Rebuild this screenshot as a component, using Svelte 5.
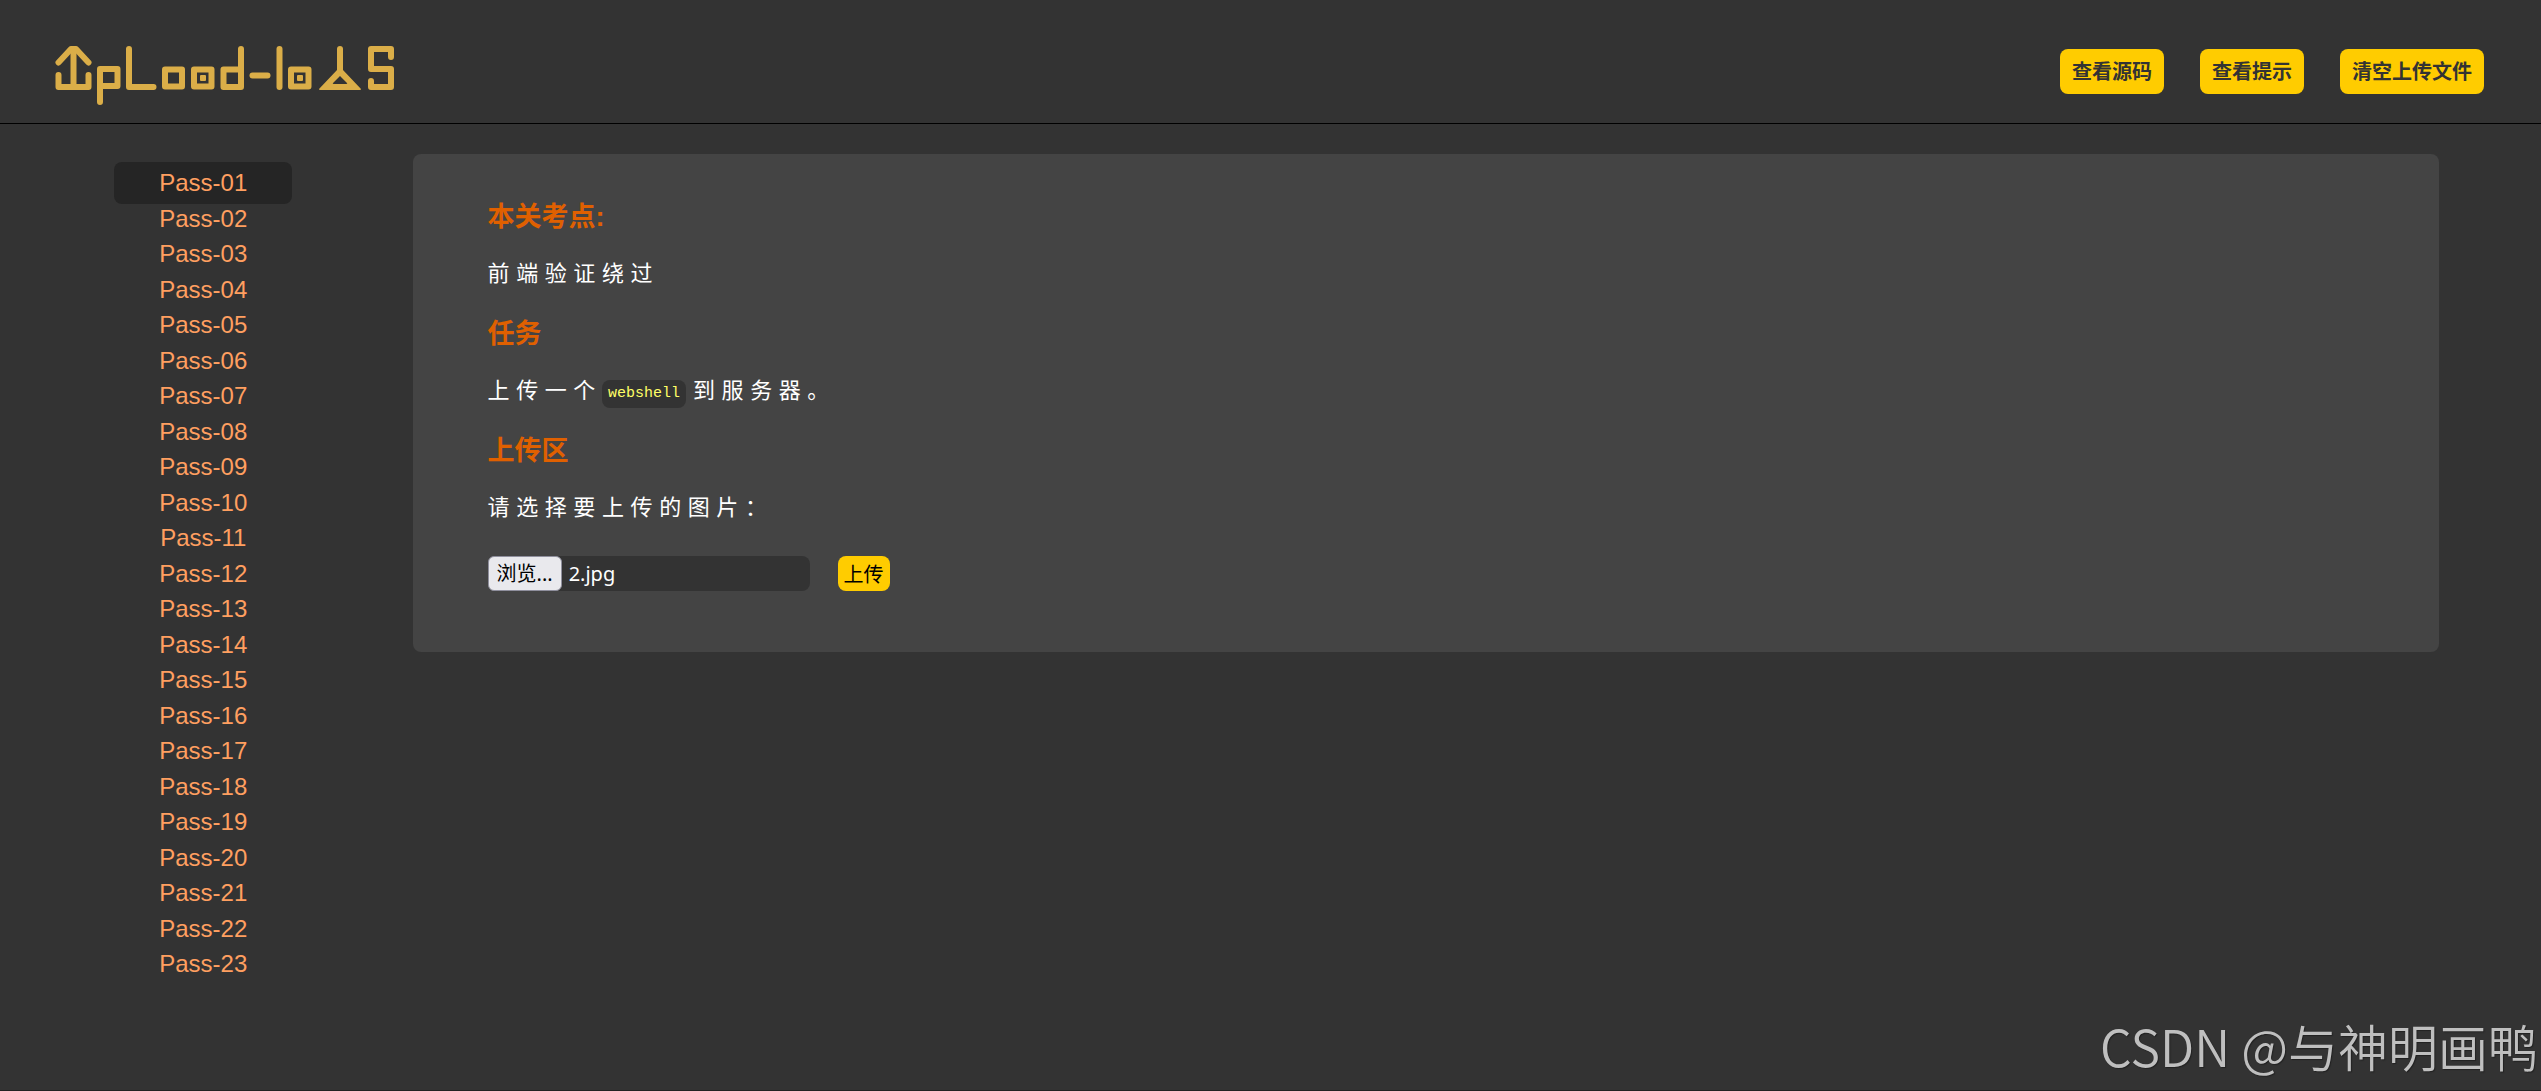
<script>
  const passes = Array.from({ length: 23 }, (_, i) => `Pass-${String(i + 1).padStart(2, '0')}`);
  const actions = ['查看源码', '查看提示', '清空上传文件'];
  let current = $state('Pass-01');
  let fileName = $state('2.jpg');

  function pick(event) {
    fileName = event.currentTarget.files[0]?.name ?? '';
  }
</script>

<div class="page">
  <header>
    <a class="logo" href="#home" aria-label="Upload-labs">
      <svg viewBox="0 0 340 62" width="340" height="62" fill="none" stroke="#dbae48" stroke-width="6" stroke-linejoin="round" stroke-linecap="round">
        <path d="M3.5 17.5 16 4h5L33.500 17.500" />
        <path d="M18.500 5V42M3.500 30V42H33.500V30" />
        <path d="M45 57V24H62.500V41H46" />
        <path d="M74 4V42H98.500" />
        <path d="M110 24.500h17v17h-17z" />
        <path d="M139 24.500h17.500v17h-17.500z" />
        <path d="M186 4V42H168.500V24.500H186" />
        <path d="M197.500 30.500H212.500" />
        <path d="M224.500 4V42" />
        <path d="M236 24.500h17.500v17h-17.500z" />
        <path d="M285 4V26" />
        <path d="M336 12V4H316V24H336V42H316V36" />
        <g fill="#dbae48" stroke="none">
          <rect x="145" y="30" width="6" height="6" rx="1" />
          <rect x="242" y="30" width="6" height="6" rx="1" />
          <path fill-rule="evenodd" d="M282 25h6l18 19q0 1-1 1H265q-1 0-1-1zM285 31l-7 7q-1 1 1 1h12q2 0 1-1z" />
        </g>
      </svg>
    </a>
    <nav class="actions">
      {#each actions as action}
        <button type="button">{action}</button>
      {/each}
    </nav>
  </header>

  <div class="body">
    <nav class="menu" aria-label="Pass">
      <ul>
        {#each passes as pass}
          <li>
            <a href="#{pass}" class:active={pass === current} onclick={() => (current = pass)}>{pass}</a>
          </li>
        {/each}
      </ul>
    </nav>

    <main>
      <h3>本关考点:</h3>
      <p>前端验证绕过</p>
      <h3>任务</h3>
      <p>上传一个<code>webshell</code>到服务器。</p>
      <h3>上传区</h3>
      <p>请选择要上传的图片：</p>
      <form onsubmit={(e) => e.preventDefault()}>
        <label class="file">
          <input type="file" onchange={pick} />
          <span class="browse">浏览...</span>
          <span>{fileName}</span>
        </label>
        <button type="submit">上传</button>
      </form>
    </main>
  </div>

  <div class="watermark">CSDN @与神明画鸭</div>
</div>

<style>
  :global(body) {
    margin: 0;
    background: #333;
  }
  .page {
    position: relative;
    box-sizing: border-box;
    min-height: 100vh;
    border-bottom: 1px solid #222;
    font-family: 'Liberation Sans', 'Noto Sans CJK SC', sans-serif;
    color: #fff;
  }
  header {
    display: flex;
    justify-content: space-between;
    align-items: flex-start;
    padding: 45px 57px 16px 55px;
    border-bottom: 1px solid #000;
  }
  .logo {
    display: block;
  }
  .logo svg {
    display: block;
  }
  .actions {
    display: flex;
    gap: 36px;
    padding-top: 4px;
  }
  button {
    border: 0;
    border-radius: 8px;
    background: #fc0;
    font-family: 'Noto Sans CJK SC', sans-serif;
    font-size: 20px;
    cursor: pointer;
  }
  .actions button {
    height: 45px;
    padding: 0 12px 2px;
    color: #333;
    font-weight: 700;
  }
  .body {
    display: flex;
    align-items: flex-start;
    gap: 6px;
    padding: 30px 4% 0 0;
  }
  .menu {
    flex: 0 0 16vw;
    padding-top: 11px;
  }
  ul {
    display: grid;
    grid-template-rows: repeat(23, 1fr);
    height: 817px;
    margin: 0;
    padding: 0;
    list-style: none;
    text-align: center;
  }
  li {
    line-height: 36px;
    font-size: 24px;
    height: 0;
  }
  li a {
    padding: 7px 45px 8px;
    border-radius: 8px;
    color: #ff9f60;
    text-decoration: none;
  }
  li a.active {
    background: #252525;
  }
  main {
    flex: 1;
    padding: 43px 75px 61px;
    border-radius: 8px;
    background: #444;
  }
  h3 {
    margin: 0 0 19px;
    color: #e06000;
    font-size: 27px;
    line-height: 40px;
  }
  p {
    margin: 0 0 22px;
    font-size: 22px;
    line-height: 36px;
    letter-spacing: 0.3em;
  }
  code {
    display: inline-block;
    margin-right: 7px;
    padding: 0 6px;
    border-radius: 8px;
    background: #333;
    color: #ff6;
    font-family: 'Liberation Mono', monospace;
    font-size: 15px;
    line-height: 28px;
    letter-spacing: normal;
    vertical-align: 1px;
  }
  form {
    display: flex;
    gap: 28px;
    padding-top: 8px;
    font-family: 'Noto Sans', 'Noto Sans CJK SC', sans-serif;
    font-size: 20px;
  }
  .file {
    position: relative;
    display: flex;
    align-items: center;
    gap: 7px;
    width: 322px;
    height: 35px;
    border-radius: 8px;
    background: #333;
    cursor: pointer;
  }
  .file input {
    position: absolute;
    inset: 0;
    width: 100%;
    opacity: 0;
    cursor: pointer;
  }
  .browse {
    box-sizing: border-box;
    height: 35px;
    padding: 0 8px;
    border: 1px solid #8f8f9d;
    border-radius: 6px;
    background: #e9e9ed;
    color: #000;
    line-height: 33px;
  }
  form button {
    height: 35px;
    padding: 0 6px;
    color: #000;
  }
  .watermark {
    position: absolute;
    right: 3px;
    bottom: 8px;
    color: #bfbfbf;
    font-family: 'Noto Sans CJK SC', sans-serif;
    font-size: 50px;
    font-weight: 350;
    line-height: 74px;
    text-shadow: 1px 1px 1px #222;
  }
</style>
